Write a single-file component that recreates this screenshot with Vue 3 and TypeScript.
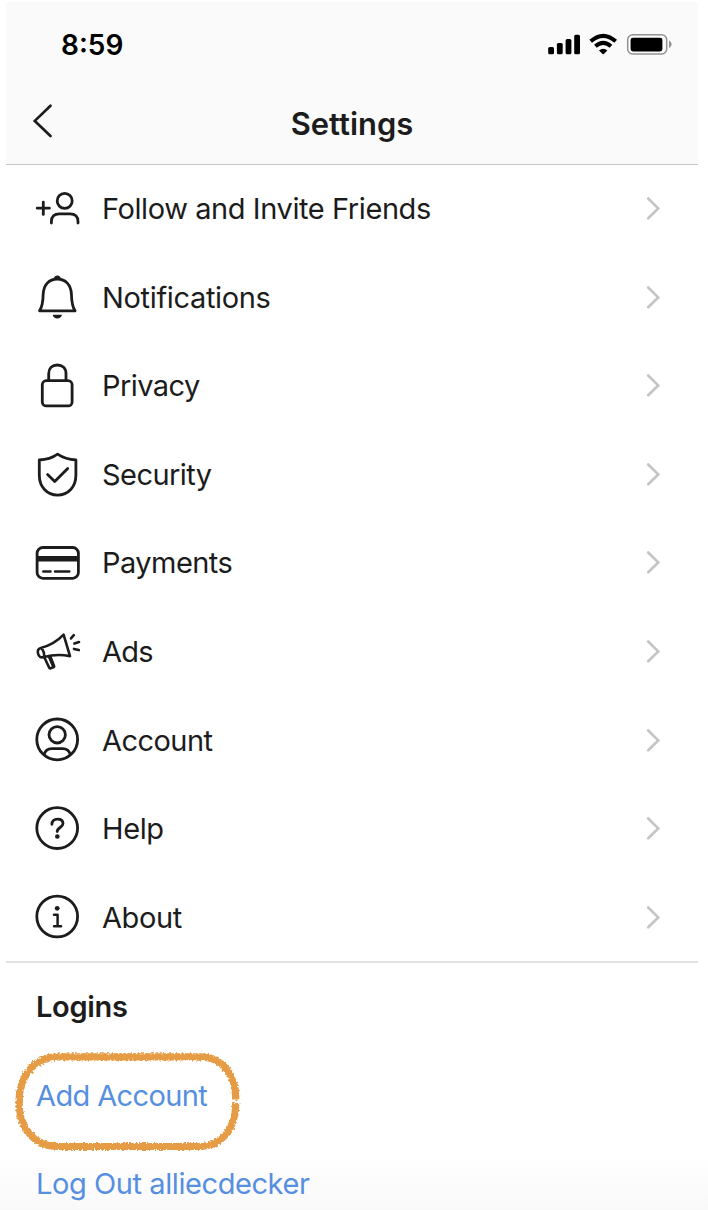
<script setup lang="ts">
interface Row {
  id: string
  label: string
}

const rows: Row[] = [
  { id: 'follow', label: 'Follow and Invite Friends' },
  { id: 'notifications', label: 'Notifications' },
  { id: 'privacy', label: 'Privacy' },
  { id: 'security', label: 'Security' },
  { id: 'payments', label: 'Payments' },
  { id: 'ads', label: 'Ads' },
  { id: 'account', label: 'Account' },
  { id: 'help', label: 'Help' },
  { id: 'about', label: 'About' },
]
</script>

<template>
  <main class="screen">
    <header class="top">
      <div class="status">
        <span class="time">8:59</span>
        <svg class="indicators" width="126" height="24" viewBox="546 32 126 24">
          <rect x="548.2" y="47" width="5.8" height="7.3" rx="1.5" />
          <rect x="556.9" y="43" width="5.8" height="11.3" rx="1.5" />
          <rect x="565.6" y="39" width="5.8" height="15.3" rx="1.5" />
          <rect x="574.2" y="34.7" width="5.8" height="19.6" rx="1.5" />
          <g class="waves">
            <path d="M590.7 41.3Q603.2 30.3 615.7 41.3" />
            <path d="M595.4 46.3Q603.2 39.5 611 46.3" />
          </g>
          <path d="M599 50.5Q603.2 47 607.4 50.5L603.8 54Q603.2 54.5 602.6 54Z" />
          <rect class="shell" x="627.7" y="34.8" width="39" height="19.2" rx="5" />
          <rect x="630.6" y="37.7" width="31.8" height="13.7" rx="2.4" />
          <path class="nub" d="M669 40.5Q671.6 41.8 671.6 44.3T669 48.2Z" />
        </svg>
      </div>
      <div class="nav">
        <svg class="back" width="24" height="40" viewBox="30 101 24 40">
          <path d="M50.5 105.8L34.8 120.9L50.5 136" />
        </svg>
        <h1>Settings</h1>
      </div>
    </header>

    <ul class="rows">
      <li v-for="row in rows" :key="row.id" class="row">
        <svg class="icon" width="48" height="48" viewBox="0 0 48 48">
          <template v-if="row.id === 'follow'">
            <circle cx="31.7" cy="14.9" r="7.5" />
            <path d="M18.4 37V35.4C18.4 30.6 21.4 27.8 26.2 27.8H37.2C42 27.8 45 30.6 45 35.4V37" />
            <path d="M4.2 22.2H16.4M10.3 16.2V28.4" />
          </template>
          <template v-else-if="row.id === 'notifications'">
            <path d="M6.5 35.8C9.3 32 10 27 10.2 19C10.6 10 16 4 24.3 4S38 10 38.4 19C38.6 27 39.3 32 42.1 35.8Z" />
            <path class="solid" d="M20.4 4.8Q21.2 .4 24.3 .4T28.2 4.8ZM19.7 39.7H29Q28 43.5 24.3 43.5T19.7 39.7Z" />
          </template>
          <template v-else-if="row.id === 'privacy'">
            <rect x="9.3" y="17.7" width="29.8" height="25.2" rx="4" />
            <path d="M15.7 17.7V10.7C15.7 5.3 19.2 2 24.3 2S33 5.3 33 10.7V17.7" />
          </template>
          <template v-else-if="row.id === 'security'">
            <path d="M24.6 2.2C19 6.2 13 7.8 6.3 8V23C6.3 35 14 43.1 24.6 43.1S42.9 35 42.9 23V8C36.5 7.8 30.5 6.2 24.6 2.2Z" />
            <path d="M14.6 22.6L21.7 29.4L34.7 16.4" />
          </template>
          <template v-else-if="row.id === 'payments'">
            <rect x="4.1" y="7.5" width="41.3" height="30.8" rx="5.8" />
            <path class="solid" d="M4 16.1H46V21.5H4Z" />
            <path class="thin" d="M10.3 31.5H17.5M22 31.5H36.3" />
          </template>
          <template v-else-if="row.id === 'ads'">
            <path class="fine" d="M7.8 18.9C16.5 16.9 24.5 12.1 30.6 5.7L37 27.1C28.2 25.5 19.5 25.7 11 28.1C7.8 29.1 5.7 27.5 5 24.5S5.2 19.6 7.8 18.9ZM8.4 19.1C10.4 21.4 11.5 24.4 11 27.9" />
            <path class="fine" d="M11.3 28.3L16 38.3Q16.5 39.6 17.7 39.2L20.3 38.3Q21.5 37.8 21 36.7L17.2 27.3M15.8 27.3L20 36.9" />
            <path class="fine" d="M38 9.4L40.8 6.2M41.4 14.6L46 13.1M41 19.9L45.8 21.1" />
          </template>
          <template v-else-if="row.id === 'account'">
            <circle cx="24.2" cy="22.4" r="20.4" />
            <circle cx="24.2" cy="17.8" r="8.2" />
            <path d="M11.1 37.7C12.1 33.7 14.9 31.6 18.9 31.6H29.5C33.5 31.6 36.3 33.7 37.3 37.7" />
          </template>
          <template v-else-if="row.id === 'help'">
            <circle cx="24.2" cy="22.1" r="20.4" />
            <path d="M18.9 18.3C18.9 14.9 21 13.2 24.5 13.2S30 14.9 30 17.6C30 21.7 24.2 21.3 24.2 25.6" />
            <circle class="solid" cx="24.3" cy="30.5" r="2.3" />
          </template>
          <template v-else>
            <circle cx="24.2" cy="22.5" r="20.4" />
            <path class="thin" d="M21 20.8H24.6V32.2M21 32.2H28.1" />
            <circle class="solid" cx="24.2" cy="14.3" r="2.4" />
          </template>
        </svg>
        <span class="label" :class="row.id">{{ row.label }}</span>
        <svg class="chevron" width="16" height="26" viewBox="0 0 16 26">
          <path d="M3.2 2.5L13.2 12.4L3.2 22.3" />
        </svg>
      </li>
    </ul>

    <section class="logins">
      <h2>Logins</h2>
      <div class="login-item">
        <a class="add">Add Account</a>
        <svg class="ring" width="240" height="112" viewBox="8 1045 240 112">
          <defs>
            <filter id="chalk" x="-5%" y="-10%" width="110%" height="120%">
              <feTurbulence type="fractalNoise" baseFrequency="0.5" numOctaves="2" seed="4" result="n" />
              <feDisplacementMap in="SourceGraphic" in2="n" scale="5.5" xChannelSelector="R" yChannelSelector="G" />
            </filter>
          </defs>
          <path
            filter="url(#chalk)"
            d="M235.8 1103C235.8 1128 222 1146.5 200 1146.5H58C34 1146.5 19 1128 19 1101.7S35 1056.9 58 1056.9H200C222 1056.9 235.8 1074 235.8 1099.4"
          />
        </svg>
      </div>
      <div class="login-item last"><a class="logout">Log Out alliecdecker</a></div>
    </section>
  </main>
</template>

<style>
body {
  margin: 0;
  background: #fff;
}
</style>

<style scoped>
.screen {
  box-sizing: border-box;
  width: 708px;
  height: 1210px;
  padding: 2px 10px 0 6px;
  overflow: hidden;
  background: linear-gradient(#fff 1158px, #f9f9f9 1210px);
  color: #1c1c1c;
  font-family: Inter, 'Liberation Sans', sans-serif;
}
.top {
  box-sizing: border-box;
  height: 163px;
  background: #fafafa;
  border-bottom: 1px solid #c6c6c6;
}
.status {
  display: flex;
  align-items: center;
  justify-content: space-between;
  height: 84px;
  padding: 0 26px 0 55px;
}
.time {
  padding-top: 2px;
  color: #000;
  font-size: 28px;
  font-weight: 600;
}
.waves {
  fill: none;
  stroke: #000;
  stroke-width: 4;
}
.shell {
  fill: none;
  stroke: #929292;
  stroke-width: 1.5;
}
.nub {
  fill: #929292;
}
.nav {
  display: grid;
  grid-template-columns: 48px 1fr 48px;
  align-items: center;
  height: 76px;
}
.back {
  margin: -7px 0 0 24px;
  fill: none;
  stroke: #1c1c1c;
  stroke-width: 2.7;
  stroke-linecap: round;
}
h1 {
  margin: -2px 0 0;
  font-size: 30.9px;
  font-weight: 600;
  text-align: center;
}
.rows {
  height: 796px;
  margin: 0;
  padding: 0;
  list-style: none;
  border-bottom: 2px solid #e2e2e2;
}
.row {
  display: flex;
  align-items: center;
  height: 88.55px;
  padding: 0 37px 0 27px;
}
.icon {
  flex: none;
  margin-top: 1.4px;
  fill: none;
  stroke: #1c1c1c;
  stroke-width: 2.8;
  stroke-linecap: round;
  stroke-linejoin: round;
}
.icon .solid {
  fill: #1c1c1c;
  stroke: none;
}
.icon .thin {
  stroke-width: 2.5;
}
.icon .fine {
  stroke-width: 2.6;
}
.label {
  flex: 1;
  margin: -1px 0 0 21px;
  font-size: 29px;
  letter-spacing: -0.55px;
}
.label.follow {
  letter-spacing: -0.42px;
}
.label.notifications {
  letter-spacing: -0.34px;
}
.label.ads {
  letter-spacing: -0.8px;
}
.label.help,
.label.about {
  letter-spacing: -0.4px;
}
.chevron {
  fill: none;
  stroke: #c5c5c5;
  stroke-width: 2.7;
  stroke-linecap: round;
}
.logins {
  padding-left: 30px;
}
h2 {
  margin: 0;
  font-size: 29px;
  font-weight: 600;
  letter-spacing: -0.3px;
  line-height: 88px;
}
.login-item {
  position: relative;
  height: 88.5px;
  color: #568fe0;
  font-size: 29px;
  line-height: 89.5px;
}
.login-item.last {
  line-height: 87.5px;
}
.add {
  letter-spacing: -0.62px;
}
.logout {
  letter-spacing: -0.42px;
}
.ring {
  position: absolute;
  top: -6px;
  left: -28px;
  fill: none;
  stroke: #e69b45;
  stroke-width: 7.2;
}
</style>
